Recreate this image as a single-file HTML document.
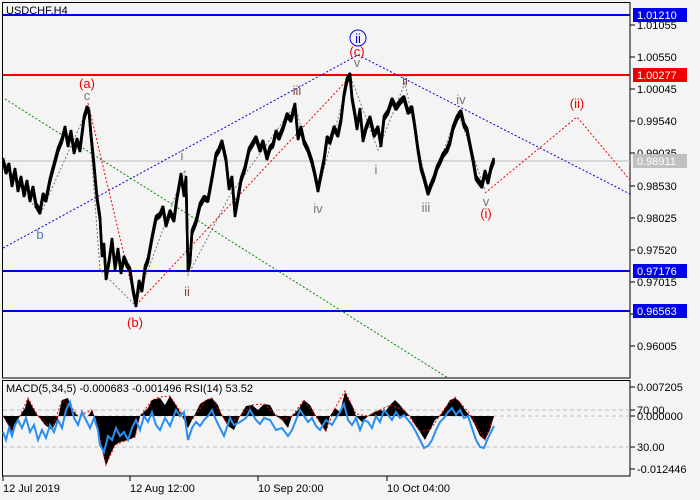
<!DOCTYPE html>
<html><head><meta charset="utf-8"><style>
html,body{margin:0;padding:0;background:#f4f4f4;}
svg{display:block;font-family:"Liberation Sans",sans-serif;}
</style></head><body>
<svg width="700" height="500" viewBox="0 0 700 500" xmlns="http://www.w3.org/2000/svg">
<defs>
<polyline id="pr" fill="none" stroke-linejoin="bevel" points="3,160 6,172 9,165 12,185 15,170 18,190 21,178 24,195 27,182 30,200 33,188 36,205 40,212 43,195 46,200 50,180 54,165 58,150 62,140 65,128 68,145 71,132 74,152 77,140 80,150 84,118 87,108 89,112 91,135 94,165 97,198 100,218 102,255 104,245 106,278 109,262 112,240 115,268 118,250 121,272 124,258 127,265 130,270 133,290 136,305 139,282 142,290 145,268 148,260 152,238 156,218 160,215 163,208 166,225 170,212 174,220 177,198 181,175 184,195 186,178 188,270 190,262 192,232 196,222 200,205 204,198 208,200 212,178 216,155 219,150 222,142 226,160 229,188 232,178 235,215 238,198 241,180 245,168 249,150 252,145 256,138 260,150 263,142 267,158 270,148 273,145 276,132 279,138 283,128 287,115 291,120 295,105 298,138 301,128 304,142 308,150 312,162 315,175 318,190 321,175 324,160 327,138 330,142 334,128 338,135 341,120 344,95 347,80 350,75 352,98 355,115 357,128 360,110 363,140 366,128 370,118 374,135 378,128 381,145 384,118 388,112 392,100 396,108 400,102 404,98 408,112 412,108 415,128 418,150 421,168 424,178 428,193 431,185 434,178 437,168 440,162 443,155 447,150 450,142 453,128 457,118 461,112 464,125 467,130 470,145 473,160 476,178 479,182 482,186 485,172 488,182 491,168 494,160"/>
</defs>
<rect width="700" height="500" fill="#f4f4f4"/>
<rect x="2.5" y="2.5" width="627.5" height="375.5" fill="#f4f4f4" stroke="#000" stroke-width="1"/>
<text x="6" y="14" font-size="11" fill="#000">USDCHF,H4</text>
<line x1="3" y1="161" x2="630" y2="161" stroke="#bbb" stroke-width="1"/>
<line x1="3" y1="15" x2="630" y2="15" stroke="#0000ee" stroke-width="2"/>
<line x1="3" y1="75" x2="630" y2="75" stroke="#ee0000" stroke-width="2"/>
<line x1="3" y1="271" x2="630" y2="271" stroke="#0000ee" stroke-width="2"/>
<line x1="3" y1="311" x2="630" y2="311" stroke="#0000ee" stroke-width="2"/>
<g fill="none" stroke-width="1" stroke-dasharray="2,2">
<polyline points="3,248 358,55" stroke="#0000dd"/>
<polyline points="358,55 630,194" stroke="#0000dd"/>
<polyline points="5,99 448,378" stroke="#008800"/>
<polyline points="88,103 136,305 352,75" stroke="#ee0000"/>
<polyline points="485,193 577,117 630,180" stroke="#ee0000"/>
<polyline points="3,160 40,215 88,108 100,270 135,305 185,170 188,275 230,195 295,105 318,190 350,75 378,150 405,83 428,193 458,112 485,190" stroke="#777"/>
</g>
<use href="#pr" stroke="#000" stroke-width="2.5"/>
<use href="#pr" stroke="#000" stroke-width="2.5" transform="translate(0,2)"/>
<use href="#pr" stroke="#000" stroke-width="2.5" transform="translate(0,-2)"/>
<g font-size="13" text-anchor="middle">
<text x="87" y="88" fill="#ee0000">(a)</text>
<text x="87" y="100" fill="#777">c</text>
<text x="40" y="239" fill="#5577aa">b</text>
<text x="182" y="160" fill="#777">i</text>
<text x="187" y="296" fill="#884444">ii</text>
<text x="135" y="327" fill="#ee0000">(b)</text>
<text x="297" y="95" fill="#884444">iii</text>
<text x="318" y="213" fill="#777">iv</text>
<text x="358" y="43" fill="#0000dd">ii</text>
<circle cx="358" cy="38" r="8" fill="none" stroke="#0000dd" stroke-width="1"/>
<text x="357" y="56" fill="#ee0000">(c)</text>
<text x="357" y="67" fill="#777">v</text>
<text x="405" y="85" fill="#884444">ii</text>
<text x="376" y="174" fill="#777">i</text>
<text x="426" y="212" fill="#777">iii</text>
<text x="461" y="104" fill="#777">iv</text>
<text x="486" y="206" fill="#777">v</text>
<text x="486" y="218" fill="#ee0000">(i)</text>
<text x="577" y="108" fill="#ee0000">(ii)</text>
</g>
<g font-size="11" fill="#000">
<g stroke="#000"><line x1="630" y1="25" x2="635" y2="25"/><line x1="630" y1="57" x2="635" y2="57"/><line x1="630" y1="89" x2="635" y2="89"/><line x1="630" y1="121" x2="635" y2="121"/><line x1="630" y1="153" x2="635" y2="153"/><line x1="630" y1="186" x2="635" y2="186"/><line x1="630" y1="218" x2="635" y2="218"/><line x1="630" y1="250" x2="635" y2="250"/><line x1="630" y1="282" x2="635" y2="282"/><line x1="630" y1="314" x2="635" y2="314"/><line x1="630" y1="346" x2="635" y2="346"/></g>
<text x="637" y="29">1.01055</text>
<text x="637" y="61">1.00550</text>
<text x="637" y="93">1.00045</text>
<text x="637" y="125">0.99540</text>
<text x="637" y="157">0.99035</text>
<text x="637" y="190">0.98530</text>
<text x="637" y="222">0.98025</text>
<text x="637" y="254">0.97520</text>
<text x="637" y="286">0.97015</text>
<text x="637" y="350">0.96005</text>
</g>
<g font-size="11" fill="#fff">
<rect x="633" y="8" width="54" height="14" fill="#0000ee"/><text x="637" y="19">1.01210</text>
<rect x="633" y="68" width="54" height="14" fill="#ee0000"/><text x="637" y="79">1.00277</text>
<rect x="633" y="154" width="54" height="14" fill="#c0c0c0"/><text x="637" y="165">0.98911</text>
<rect x="633" y="264" width="54" height="14" fill="#0000ee"/><text x="637" y="275">0.97176</text>
<rect x="633" y="304" width="54" height="14" fill="#0000ee"/><text x="637" y="315">0.96563</text>
</g>
<rect x="2.5" y="380.5" width="627.5" height="95.5" fill="#f4f4f4" stroke="#000" stroke-width="1"/>
<g stroke="#bbb" stroke-dasharray="4,3"><line x1="3" y1="410" x2="630" y2="410"/><line x1="3" y1="416" x2="630" y2="416"/><line x1="3" y1="447" x2="630" y2="447"/></g>
<polygon fill="#000" points="3,416 8,425 12,432 16,422 20,416 25,408 28,398 33,408 38,416 45,425 52,430 58,418 62,400 68,398 72,410 78,416 88,416 92,410 96,420 100,440 104,458 106,466 110,455 115,445 120,442 128,440 135,437 140,416 148,408 152,400 160,398 165,405 170,396 176,405 182,416 188,428 192,420 196,412 200,404 206,400 212,398 218,405 222,416 228,426 234,430 240,416 246,406 252,405 258,410 264,404 270,405 276,416 282,420 288,428 292,416 298,410 304,400 310,405 316,416 322,426 326,432 330,416 335,408 340,412 345,392 348,398 352,405 356,416 362,422 368,416 374,412 380,410 385,412 390,405 395,400 400,405 404,410 410,416 415,425 420,432 425,440 430,430 435,420 440,416 445,408 450,400 455,398 460,402 465,410 470,416 475,425 480,436 485,440 490,430 494,416"/>
<polyline fill="none" stroke="#ee0000" stroke-width="1" stroke-dasharray="2,2" points="3,416 12,430 20,416 28,398 38,416 52,429 62,400 72,408 78,416 92,410 100,438 106,465 115,445 135,437 140,416 152,400 160,397 170,396 182,414 192,420 206,400 212,398 228,425 240,416 252,405 264,404 282,420 292,416 304,400 326,431 335,408 345,391 356,414 368,416 390,405 404,410 420,431 430,430 445,408 455,397 470,414 485,440 494,416"/>
<polyline fill="none" stroke="#2a8ef0" stroke-width="2" points="3,432 6,440 9,428 12,436 15,425 18,420 22,428 26,418 30,432 34,425 38,440 42,430 46,438 50,425 54,432 58,420 62,428 66,410 70,402 74,418 78,425 82,412 86,420 90,428 94,418 98,430 100,445 104,452 108,436 112,440 116,428 120,436 124,432 128,440 132,428 136,420 140,430 144,416 148,422 152,412 156,425 160,430 165,418 170,426 176,410 180,416 184,412 188,440 192,428 196,422 200,426 204,420 208,416 212,410 216,420 220,428 224,436 226,430 230,418 234,425 240,422 246,418 250,410 256,420 260,424 264,418 270,420 276,430 282,428 288,436 292,430 296,420 300,410 304,416 308,422 312,418 316,426 320,430 326,420 332,425 336,418 340,412 344,404 348,420 352,425 356,418 360,430 364,420 368,422 372,428 376,416 380,422 384,410 388,415 392,420 396,412 400,418 404,415 408,420 412,425 416,432 420,440 424,448 428,446 432,440 436,430 440,422 444,418 448,412 452,408 456,415 460,410 464,418 468,416 472,428 476,440 480,447 484,448 488,438 492,430 494,426"/>
<text x="6" y="392" font-size="11" fill="#000">MACD(5,34,5) -0.000683 -0.001496 RSI(14) 53.52</text>
<g font-size="11" fill="#000">
<g stroke="#000"><line x1="630" y1="387" x2="635" y2="387"/><line x1="630" y1="410" x2="635" y2="410"/><line x1="630" y1="416" x2="635" y2="416"/><line x1="630" y1="447" x2="635" y2="447"/><line x1="630" y1="469" x2="635" y2="469"/></g>
<text x="637" y="391">0.007205</text>
<text x="637" y="414">70.00</text>
<text x="637" y="420">0.000000</text>
<text x="637" y="451">30.00</text>
<text x="637" y="473">-0.012446</text>
</g>
<g stroke="#000"><line x1="3" y1="476" x2="3" y2="481"/><line x1="130" y1="476" x2="130" y2="481"/><line x1="258" y1="476" x2="258" y2="481"/><line x1="387" y1="476" x2="387" y2="481"/></g>
<g font-size="11" fill="#000">
<text x="3" y="492">12 Jul 2019</text>
<text x="130" y="492">12 Aug 12:00</text>
<text x="258" y="492">10 Sep 20:00</text>
<text x="387" y="492">10 Oct 04:00</text>
</g>
</svg>
</body></html>
